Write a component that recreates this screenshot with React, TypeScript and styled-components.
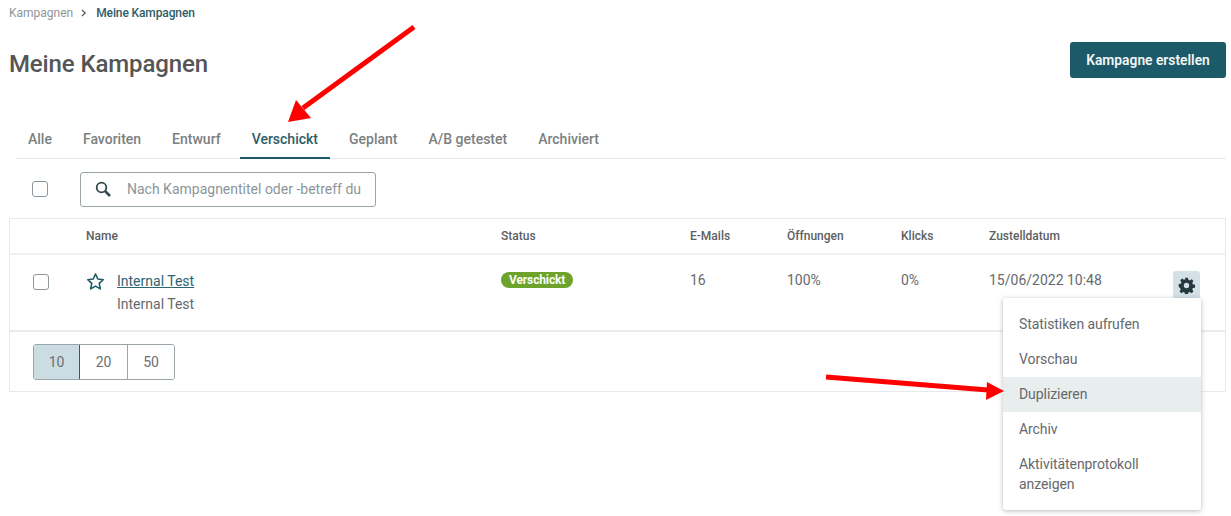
import React from "react";
import styled, { createGlobalStyle } from "styled-components";

const Global = createGlobalStyle`
  html, body { margin: 0; padding: 0; background: #fff; }
  body { font-family: Roboto, "Liberation Sans", sans-serif; color: #5f5f5f; }
  * { box-sizing: border-box; }
`;

const Page = styled.div`
  position: relative;
  width: 1231px;
  height: 516px;
  overflow: hidden;
  padding: 5px 5px 0 9px;
`;

const Crumbs = styled.nav`
  display: flex;
  align-items: center;
  height: 16px;
  font-size: 12px;
`;
const CrumbLink = styled.span`
  color: #8d9698;
`;
const CrumbSep = styled.svg`
  width: 8px;
  height: 8px;
  margin: 0 8px 0 7px;
`;
const CrumbNow = styled.span`
  color: #2f5d68;
  font-weight: 500;
  letter-spacing: -0.01em;
`;

const Header = styled.header`
  display: flex;
  justify-content: space-between;
  align-items: flex-start;
  height: 98px;
  padding-top: 21px;
`;
const Title = styled.h1`
  margin: 6px 0 0;
  font-size: 24px;
  line-height: 32px;
  font-weight: 500;
  letter-spacing: -0.005em;
  color: #555;
`;
const Primary = styled.button`
  width: 156px;
  height: 36px;
  border: 0;
  border-radius: 3px;
  background: #1c5a69;
  color: #f2f6f7;
  font: 600 13.8px Roboto, sans-serif;
`;

const Tabs = styled.div`
  display: flex;
  gap: 7px;
  height: 40px;
  margin: 0 0 0 7px;
  border-bottom: 1px solid #e7e9ea;
`;
const Tab = styled.div<{ $active?: boolean }>`
  height: 40px;
  padding: 2px 12px 0;
  display: flex;
  align-items: center;
  font-size: 14px;
  font-weight: 500;
  color: ${(p) => (p.$active ? "#2f5d68" : "#7b7f81")};
  border-bottom: 2px solid ${(p) => (p.$active ? "#1c5a69" : "transparent")};
`;

const Toolbar = styled.div`
  display: flex;
  align-items: center;
  height: 59px;
  padding: 1px 0 0 23px;
`;
const Box = styled.span`
  display: block;
  width: 16px;
  height: 16px;
  border: 1.5px solid #8b979c;
  border-radius: 3px;
  background: #fff;
`;
const Search = styled.div`
  display: flex;
  align-items: center;
  width: 296px;
  height: 35px;
  margin-left: 32px;
  padding: 0 14px 0 14px;
  border: 1px solid #9aa5a9;
  border-radius: 3px;
`;
const SearchIcon = styled.svg`
  width: 16px;
  height: 16px;
  flex: none;
  color: #33474d;
`;
const SearchText = styled.span`
  margin-left: 16px;
  font-size: 14px;
  color: #8d9698;
  white-space: nowrap;
  overflow: hidden;
`;

const Table = styled.section`
  border: 1px solid #e7e9ea;
  height: 174px;
`;
const HeadRow = styled.div`
  display: grid;
  grid-template-columns: 76px 415px 189px 97px 114px 88px 1fr;
  align-items: center;
  height: 36px;
  margin-bottom: 1px;
  border-bottom: 2px solid #eff0f1;
  font-size: 12px;
  font-weight: 500;
  color: #5c6062;
`;
const Row = styled.div`
  display: grid;
  grid-template-columns: 76px 415px 189px 97px 114px 88px 1fr;
  height: 76px;
  border-bottom: 2px solid #e9ebec;
  font-size: 14px;
  color: #666a6c;
`;
const Cell = styled.div`
  padding-top: 16px;
`;
const NameCell = styled.div`
  padding-top: 15px;
`;
const CheckCell = styled.div`
  padding: 18px 0 0 23px;
`;
const NameLine = styled.div`
  display: flex;
  align-items: center;
  height: 20px;
`;
const Star = styled.svg`
  width: 19px;
  height: 19px;
  margin-right: 12px;
  color: #1c5a69;
`;
const NameLink = styled.a`
  color: #2f6472;
  text-decoration: underline;
`;
const Sub = styled.div`
  margin: 3px 0 0 31px;
  line-height: 20px;
`;
const Badge = styled.span`
  display: inline-block;
  height: 16px;
  padding: 0 8px;
  border-radius: 8px;
  background: #6da32b;
  color: #fbfdf8;
  font-size: 12px;
  font-weight: 700;
  line-height: 16px;
  letter-spacing: -0.01em;
  vertical-align: top;
`;
const DateCell = styled.div`
  padding-top: 16px;
  white-space: nowrap;
`;
const GearButton = styled.div`
  position: absolute;
  left: 1173px;
  top: 271px;
  width: 27px;
  height: 28px;
  border-radius: 3px;
  background: #d3e0e5;
  display: flex;
  align-items: center;
  justify-content: center;
  color: #24393f;
`;
const Footer = styled.div`
  padding: 12px 0 0 23px;
`;
const Pager = styled.div`
  display: inline-flex;
  height: 36px;
  border: 1px solid #9aa5a9;
  border-radius: 3px;
  overflow: hidden;
`;
const PageSize = styled.div<{ $active?: boolean; $w: number }>`
  width: ${(p) => p.$w}px;
  display: flex;
  align-items: center;
  justify-content: center;
  font-size: 14px;
  color: #6a7073;
  background: ${(p) => (p.$active ? "#cbdce3" : "#fff")};
  border-right: 1px solid ${(p) => (p.$active ? "#2f5d68" : "#9aa5a9")};
  &:last-child { border-right: 0; }
`;

const Menu = styled.div`
  position: absolute;
  left: 1003px;
  top: 298px;
  width: 198px;
  height: 212px;
  padding: 9px 0 0;
  background: #fff;
  border-radius: 3px;
  box-shadow: 0 1px 5px rgba(0, 0, 0, 0.28);
`;
const MenuItem = styled.div<{ $hover?: boolean }>`
  min-height: 35px;
  padding: 6.5px 16px 8.5px;
  font-size: 14px;
  line-height: 20px;
  letter-spacing: -0.005em;
  color: #66696b;
  background: ${(p) => (p.$hover ? "#e8edee" : "transparent")};
`;
const Arrow = styled.svg`
  position: absolute;
  left: 0;
  top: 0;
  pointer-events: none;
`;

export default function App() {
  return (
    <Page>
      <Global />
      <Crumbs>
        <CrumbLink>Kampagnen</CrumbLink>
        <CrumbSep viewBox="0 0 8 8" fill="none" stroke="#4a5a60" strokeWidth="1.2">
          <path d="M2 1l3.2 3L2 7" />
        </CrumbSep>
        <CrumbNow>Meine Kampagnen</CrumbNow>
      </Crumbs>
      <Header>
        <Title>Meine Kampagnen</Title>
        <Primary>Kampagne erstellen</Primary>
      </Header>
      <Tabs>
        <Tab>Alle</Tab>
        <Tab>Favoriten</Tab>
        <Tab>Entwurf</Tab>
        <Tab $active>Verschickt</Tab>
        <Tab>Geplant</Tab>
        <Tab>A/B getestet</Tab>
        <Tab>Archiviert</Tab>
      </Tabs>
      <Toolbar>
        <Box />
        <Search>
          <SearchIcon viewBox="0 0 16 16" fill="none" stroke="currentColor">
            <circle cx="6.5" cy="6.5" r="4.8" strokeWidth="1.8" />
            <path d="M10.2 10.2L15 15" strokeWidth="2.6" />
          </SearchIcon>
          <SearchText>Nach Kampagnentitel oder -betreff dur</SearchText>
        </Search>
      </Toolbar>
      <Table>
        <HeadRow>
          <span />
          <span>Name</span>
          <span>Status</span>
          <span>E-Mails</span>
          <span>Öffnungen</span>
          <span>Klicks</span>
          <span>Zustelldatum</span>
        </HeadRow>
        <Row>
          <CheckCell>
            <Box />
          </CheckCell>
          <NameCell>
            <NameLine>
              <Star viewBox="0 0 24 24" fill="none" stroke="currentColor" strokeWidth="2" strokeLinejoin="round">
                <path d="M12 2.500l2.900 6.400 6.900.8-5.100 4.700 1.400 6.900-6.100-3.500-6.100 3.500 1.400-6.900-5.100-4.700 6.900-.8z" />
              </Star>
              <NameLink>Internal Test</NameLink>
            </NameLine>
            <Sub>Internal Test</Sub>
          </NameCell>
          <Cell>
            <Badge>Verschickt</Badge>
          </Cell>
          <Cell>16</Cell>
          <Cell>100%</Cell>
          <Cell>0%</Cell>
          <DateCell>15/06/2022 10:48</DateCell>
        </Row>
        <Footer>
          <Pager>
            <PageSize $active $w={46}>10</PageSize>
            <PageSize $w={48}>20</PageSize>
            <PageSize $w={46}>50</PageSize>
          </Pager>
        </Footer>
      </Table>
      <GearButton>
        <svg width="17" height="17" viewBox="0 0 24 24" fill="currentColor">
          <path
            fillRule="evenodd"
            d="M10 1h4l.6 3c.8.2 1.500.5 2.100.9l2.600-1.700 2.500 2.500-1.700 2.600c.4.6.7 1.300.9 2.100l3 .6v4l-3 .6c-.2.800-.5 1.500-.9 2.100l1.700 2.600-2.500 2.500-2.600-1.700c-.6.4-1.300.7-2.100.9l-.6 3h-4l-.6-3c-.8-.2-1.500-.5-2.100-.9l-2.600 1.700-2.500-2.500 1.700-2.600c-.4-.6-.7-1.300-.9-2.100L1 14v-4l3-.6c.2-.8.5-1.500.9-2.100L3.200 4.700l2.500-2.500 2.600 1.700c.6-.4 1.300-.7 2.100-.9zM12 8.200a3.800 3.800 0 1 0 0 7.600 3.800 3.800 0 0 0 0-7.600z"
          />
        </svg>
      </GearButton>
      <Menu>
        <MenuItem>Statistiken aufrufen</MenuItem>
        <MenuItem>Vorschau</MenuItem>
        <MenuItem $hover>Duplizieren</MenuItem>
        <MenuItem>Archiv</MenuItem>
        <MenuItem>Aktivitätenprotokoll anzeigen</MenuItem>
      </Menu>
      <Arrow width="1231" height="516" viewBox="0 0 1231 516">
        <path d="M414 27L303 108" stroke="#f00" strokeWidth="5" fill="none" />
        <path d="M288 122L296 100 L311 118z" fill="#f00" />
        <path d="M826 377L988 390" stroke="#f00" strokeWidth="5" fill="none" />
        <path d="M1004 391L987 382 L986 400z" fill="#f00" />
      </Arrow>
    </Page>
  );
}
